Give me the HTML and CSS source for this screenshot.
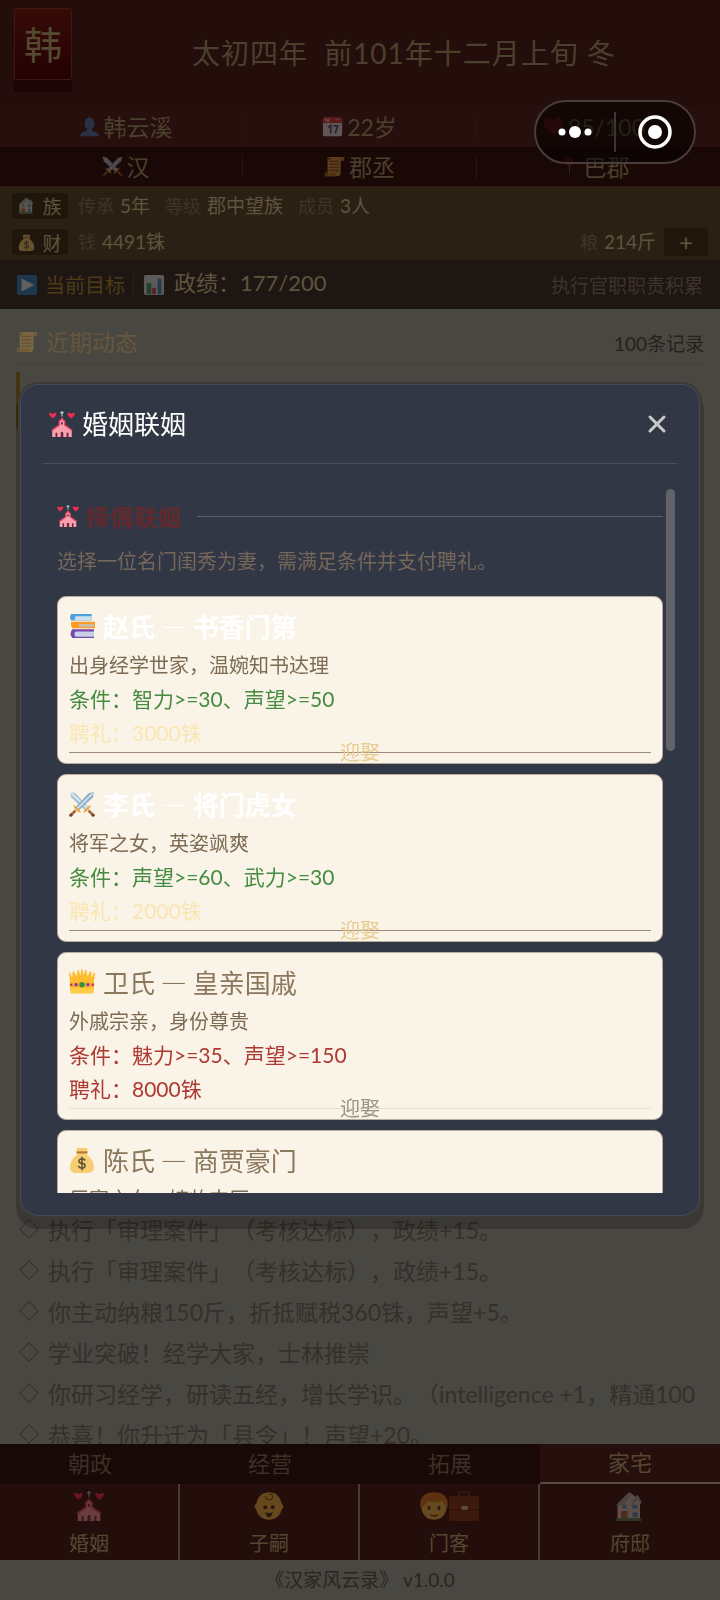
FILE: index.html
```html
<!DOCTYPE html>
<html lang="zh-CN">
<head>
<meta charset="utf-8">
<meta name="viewport" content="width=device-width, initial-scale=1">
<title>汉家风云录</title>
<link rel="stylesheet" href="styles.css">
</head>
<body>
<svg class="defs" aria-hidden="true">
  <symbol id="user" viewBox="0 0 24 24"><ellipse cx="12" cy="8.500" rx="5.500" ry="7" fill="#2a7dbd"/><path d="M9 14h6v3q7 1 8 6H1q1-5 8-6z" fill="#2a7dbd"/></symbol>
  <symbol id="calendar" viewBox="0 0 24 24"><rect x="1" y="2" width="22" height="21" rx="2" fill="#dfe9f0"/><path d="M1 8V3q0-2 2-2h18q2 0 2 2v5z" fill="#d32f3f"/><path d="M4 6V3M6 3v3h2V3M16 4h1M19 4h1" stroke="#fff" fill="none"/><path d="M7 13l3-2v9M13 11.500h5l-3 8.500" fill="none" stroke="#37668a" stroke-width="2.200"/></symbol>
  <symbol id="heart" viewBox="0 0 24 24"><path d="M12 22C3 15 1 11 1 7.500 1 1 9 0 12 6c3-6 11-5 11 1.500C23 11 21 15 12 22z" fill="#e8274b"/></symbol>
  <symbol id="swords" viewBox="0 0 24 24"><path d="M1 1l5 1 12 13-3 3L2 6z" fill="#a9c5d6"/><path d="M1 1l16 15" stroke="#e3f0f7" stroke-width="1.300"/><path d="M23 1l-5 1L6 15l3 3L22 6z" fill="#91afc2"/><path d="M22 2L8 16" stroke="#dcebf2" stroke-width="1.300"/><path d="M13 20l1-2 4-4 2-1-1 3-3 3zM11 20l-1-2-4-4-2-1 1 3 3 3z" fill="#f2a33c"/><path d="M18 18l4 4M6 18l-4 4" stroke="#a8663d" stroke-width="2.500"/><circle cx="22.300" cy="22.300" r="1.500" fill="#754335"/><circle cx="1.700" cy="22.300" r="1.500" fill="#754335"/></symbol>
  <symbol id="scroll" viewBox="0 0 24 24"><path d="M4 2q0-1 2-1h17v4h-4v14q0 4-4 4H1v-4h3z" fill="#e0ac4c"/><path d="M1 19h13v4H1zM19 1h4v4h-4z" fill="#c48a30"/><path d="M6 6h11M6 9.500h11M6 13h11M6 16.500h11" stroke="#9b6524" stroke-width="1.600"/><circle cx="3" cy="21" r="1.200" fill="#754919"/><circle cx="6" cy="3" r="1.200" fill="#754919"/></symbol>
  <symbol id="pin" viewBox="0 0 24 24"><path d="M11 9h2l-1 14z" fill="#9db4c0"/><circle cx="12" cy="6" r="5" fill="#e4334c"/></symbol>
  <symbol id="house" viewBox="0 0 24 24"><path d="M2 11L12 1l8 7v14H2z" fill="#d6d3ca"/><path d="M1 11L11 1l3 2-8 9zM14 7l4-4 3 5v3l-3-4-5 5z" fill="#a0b2b2"/><path d="M5 16h5v7H5z" fill="#a7653b"/><path d="M6 11h3v3H6zM14 11h4v3h-4zM14 17h4v4h-4z" fill="#389bd5"/><path d="M1 22h20v2H1z" fill="#438d5a"/></symbol>
  <symbol id="money" viewBox="0 0 24 24"><path d="M7 1h10v4l-1 2c5 3 7 8 7 12q0 5-5 5H6q-5 0-5-5C1 15 3 10 8 7L7 5z" fill="#f7ce72"/><path d="M7 4h10v2H7z" fill="#bb733e"/><path d="M15 12.500q-1-1.500-3-1.500c-4 0-3.500 4 0 4s4 4.500 0 4.500q-2.500 0-3.500-2M12 9v12.500" fill="none" stroke="#65563c" stroke-width="1.500"/></symbol>
  <symbol id="play" viewBox="0 0 24 24"><rect x="1" y="1" width="22" height="22" rx="2" fill="#1d80c7"/><path d="M6 5l14 7-14 7z" fill="#f3f8fa"/></symbol>
  <symbol id="chart" viewBox="0 0 24 24"><rect x="1" y="1" width="22" height="22" rx="2" fill="#dde8ef"/><path d="M4 10h5v12H4z" fill="#2f9c56"/><path d="M10 15h4v7h-4z" fill="#d23a49"/><path d="M16 5h4v17h-4z" fill="#3588c3"/></symbol>
  <symbol id="wedding" viewBox="0 0 24 24"><path d="M12 0v5M10.500 1.500h3" stroke="#c5d0d7" stroke-width="1"/><path d="M3.500 7C-.5 4-.5 1.500 1.300 1.500l2.200 1 2.200-1C7.500 1.500 7.500 4 3.500 7zM20.500 7c-4-3-4-5.500-2.200-5.500l2.200 1 2.200-1c1.800 0 1.800 2.500-2.200 5.500z" fill="#f02e50"/><path d="M10 13V9l2-2 2 2v4l7 5v6H3v-6z" fill="#fb9eaf"/><path d="M2.500 18L9.500 13V9.500L12 7l2.500 2.500V13l7 5" fill="none" stroke="#ef4664" stroke-width="1.300"/><path d="M11.200 12.500v-2q.8-1 1.600 0v2zM10.800 24v-4q1.200-1.500 2.400 0v4zM6 24v-4h1.700v4zM16.300 24v-4H18v4z" fill="#642c43"/></symbol>
  <symbol id="books" viewBox="0 0 24 24"><path d="M2 1h19v6H2q-2-3 0-6z" fill="#4da2dc"/><path d="M6 3h15v4H5z" fill="#cde0ed"/><path d="M2 8h22v6H3q-2-3-1-6z" fill="#ff9c20"/><path d="M9 10h14v3H9z" fill="#ccbca0"/><path d="M3 15h20v8H3q-3-4 0-8z" fill="#7447ac"/><path d="M6 17h17v5H6q-2-3 0-5z" fill="#c6cfe5"/></symbol>
  <symbol id="crown" viewBox="0 0 24 24"><path d="M1 12L0 4l1-1 2 5 .5-6h1L7 7l1-6h1l1.500 5L11.500 0h1l1 6L15 1h1l1 6 2.500-5h1l.5 6 2-5 1 1-1 8v8H1z" fill="#ffbc2e"/><path d="M1 12.500h22v4H1z" fill="#f0ae2c"/><path d="M1.500 18q10.500-1.500 21 0v4.500h-21z" fill="#ffcb43"/><circle cx="12" cy="14.500" r="2.500" fill="#38933b"/><circle cx="6.500" cy="14.500" r="1.500" fill="#9132b3"/><circle cx="17.500" cy="14.500" r="1.500" fill="#9132b3"/><circle cx="2" cy="14.500" r="1.200" fill="#dd3146"/><circle cx="22" cy="14.500" r="1.200" fill="#dd3146"/></symbol>
  <symbol id="baby" viewBox="0 0 24 24"><path d="M2 10C3 4 7 1 12 1s9 3 10 9q3 2 0 5c-1 5-5 8-10 8S3 20 2 15q-3-3 0-5z" fill="#edc342"/><path d="M9 4c0 4 7 4 6 0q-1-2-3-1" fill="none" stroke="#987124" stroke-width="1.200"/><circle cx="9" cy="13" r="1.600" fill="#3b2820"/><circle cx="15" cy="13" r="1.600" fill="#3b2820"/><path d="M9 17q3 1 6 0-1 4-3 4t-3-4z" fill="#3b2820"/></symbol>
  <symbol id="boy" viewBox="0 0 24 24"><path d="M2 8h20v6c-1 6-5 9-10 9S3 20 2 14z" fill="#efc64a"/><path d="M1 13Q0 1 12 1t11 12q-3-1-4-5-6 2-12 0-2 4-6 5z" fill="#d97b1c"/><path d="M8 12v3M16 12v3" stroke="#402b1c" stroke-width="2"/><path d="M9 19q3 2 6 0" fill="none" stroke="#8f442a" stroke-width="1.300"/></symbol>
  <symbol id="briefcase" viewBox="0 0 24 24"><path d="M8 5V1h8v4" fill="none" stroke="#633222" stroke-width="1.500"/><rect y="4" width="24" height="20" rx="1" fill="#74350f"/><path d="M0 15h24" stroke="#462010"/><path d="M10 12h5v3h-5z" fill="#d5d3cc"/></symbol>
</svg>

<div class="page">
  <header class="banner">
    <div class="seal">韩</div>
    <h1 class="date"><span class="era">太初四年</span><span>前101年十二月上旬</span><span class="season">冬</span></h1>
  </header>

  <div class="stats">
    <div class="stat"><svg class="icon dim"><use href="#user"/></svg>韩云溪</div>
    <div class="stat"><svg class="icon dim"><use href="#calendar"/></svg>22岁</div>
    <div class="stat"><svg class="icon faint"><use href="#heart"/></svg>85/100</div>
  </div>
  <div class="stats stats-dark">
    <div class="stat"><svg class="icon dim"><use href="#swords"/></svg>汉</div>
    <div class="stat"><svg class="icon dim"><use href="#scroll"/></svg>郡丞</div>
    <div class="stat"><svg class="icon faint"><use href="#pin"/></svg>巴郡</div>
  </div>

  <section class="clan">
    <div class="clan-row">
      <span class="chip"><svg class="icon-s dim"><use href="#house"/></svg>族</span>
      <span class="pair"><span class="key">传承</span>5年</span>
      <span class="pair"><span class="key">等级</span>郡中望族</span>
      <span class="pair"><span class="key">成员</span>3人</span>
    </div>
    <div class="clan-row">
      <span class="chip"><svg class="icon-s dim"><use href="#money"/></svg>财</span>
      <span class="pair"><span class="key">钱</span>4491铢</span>
      <span class="pair grain"><span class="key">粮</span>214斤</span>
      <button class="add" type="button" aria-label="购粮">+</button>
    </div>
  </section>

  <section class="goal">
    <svg class="icon-m dim"><use href="#play"/></svg><span class="goal-name">当前目标</span>
    <svg class="icon-m dim"><use href="#chart"/></svg><span class="goal-value">政绩：177/200</span>
    <span class="goal-tip">执行官职职责积累</span>
  </section>

  <main class="news">
    <div class="news-head"><svg class="icon-m dim"><use href="#scroll"/></svg><h2>近期动态</h2><span class="count">100条记录</span></div>
    <div class="latest"></div>
    <ul class="log">
      <li>执行「审理案件」（考核达标），政绩+15。</li>
      <li>执行「审理案件」（考核达标），政绩+15。</li>
      <li>你主动纳粮150斤，折抵赋税360铢，声望+5。</li>
      <li>学业突破！经学大家，士林推崇</li>
      <li>你研习经学，研读五经，增长学识。（intelligence +1，精通100</li>
      <li>恭喜！你升迁为「县令」！声望+20。</li>
    </ul>
  </main>

  <nav>
    <div class="tabs">
      <button type="button">朝政</button><button type="button">经营</button><button type="button">拓展</button><button class="active" type="button">家宅</button>
    </div>
    <div class="menu">
      <button type="button"><span class="pics"><svg class="icon-l dim"><use href="#wedding"/></svg></span>婚姻</button>
      <button type="button"><span class="pics"><svg class="icon-l dim"><use href="#baby"/></svg></span>子嗣</button>
      <button type="button"><span class="pics"><svg class="icon-l dim"><use href="#boy"/></svg><svg class="icon-l dim"><use href="#briefcase"/></svg></span>门客</button>
      <button type="button"><span class="pics"><svg class="icon-l dim"><use href="#house"/></svg></span>府邸</button>
    </div>
  </nav>
  <footer>《汉家风云录》 v1.0.0</footer>
</div>

<div class="capsule">
  <button type="button" aria-label="更多"><svg width="36" height="14" viewBox="0 0 36 14"><circle cx="5" cy="7" r="3.500"/><circle cx="18" cy="7" r="6"/><circle cx="31" cy="7" r="3.500"/></svg></button>
  <button type="button" aria-label="关闭小程序"><svg width="34" height="34" viewBox="0 0 34 34"><circle cx="17" cy="17" r="15" fill="none" stroke="#fff" stroke-width="3.500"/><circle cx="17" cy="17" r="7"/></svg></button>
</div>

<div class="overlay">
  <div class="modal" role="dialog" aria-labelledby="dialog-title">
    <div class="modal-head">
      <svg class="icon-t"><use href="#wedding"/></svg>
      <h2 id="dialog-title">婚姻联姻</h2>
      <button class="close" type="button" aria-label="关闭"><svg width="20" height="20" viewBox="0 0 20 20"><path d="M3 3l14 14M17 3L3 17" fill="none" stroke="#c9c9c9" stroke-width="3" stroke-linecap="round"/></svg></button>
    </div>
    <div class="modal-body">
      <div class="scroller">
        <h3 class="section"><svg class="icon-m"><use href="#wedding"/></svg>择偶联姻</h3>
        <p class="intro">选择一位名门闺秀为妻，需满足条件并支付聘礼。</p>
        <article class="card open">
          <h4><svg class="icon-t"><use href="#books"/></svg>赵氏 — 书香门第</h4>
          <p>出身经学世家，温婉知书达理</p>
          <p class="need">条件：智力&gt;=30、声望&gt;=50</p>
          <p class="cost">聘礼：3000铢</p>
          <button type="button">迎娶</button>
        </article>
        <article class="card open">
          <h4><svg class="icon-t"><use href="#swords"/></svg>李氏 — 将门虎女</h4>
          <p>将军之女，英姿飒爽</p>
          <p class="need">条件：声望&gt;=60、武力&gt;=30</p>
          <p class="cost">聘礼：2000铢</p>
          <button type="button">迎娶</button>
        </article>
        <article class="card">
          <h4><svg class="icon-t"><use href="#crown"/></svg>卫氏 — 皇亲国戚</h4>
          <p>外戚宗亲，身份尊贵</p>
          <p class="need">条件：魅力&gt;=35、声望&gt;=150</p>
          <p class="cost">聘礼：8000铢</p>
          <button type="button" disabled>迎娶</button>
        </article>
        <article class="card">
          <h4><svg class="icon-t"><use href="#money"/></svg>陈氏 — 商贾豪门</h4>
          <p>巨富之女，嫁妆丰厚</p>
        </article>
      </div>
      <div class="thumb"></div>
    </div>
  </div>
</div>
</body>
</html>
```
FILE: styles.css
```css
* { box-sizing: border-box; }
body { margin: 0; background: #494741; font-family: Lato, "Noto Sans CJK SC", sans-serif; text-spacing-trim: space-all; }
h1, h2, h3, h4, p, ul { margin: 0; padding: 0; font-weight: 400; }
button { font: inherit; color: inherit; background: none; border: 0; padding: 0; }
svg { display: block; flex: none; }
.defs { position: absolute; width: 0; height: 0; }
.dim { opacity: 0.32; }
.faint { opacity: 0.2; }
.icon { width: 21px; height: 21px; }
.icon-s { width: 17px; height: 17px; }
.icon-m { width: 22px; height: 22px; }
.icon-t { width: 26px; height: 26px; }
.icon-l { width: 30px; height: 30px; }

.page { display: flex; flex-direction: column; height: 100vh; overflow: hidden; }

.banner { display: flex; height: 106px; padding: 8px 14px; flex: none; background: #240e0b; color: #4b402e; }
.seal { width: 58px; height: 72px; line-height: 70px; font-size: 38px; text-align: center; color: #554a31; background: linear-gradient(#360b08, #230202); border: 1px solid #42180e; border-radius: 2px; box-shadow: 0 12px 0 #1c0605; }
.date { flex: 1; display: flex; justify-content: center; gap: 8px; padding-left: 30px; font-size: 28px; line-height: 90px; letter-spacing: 1px; white-space: nowrap; }
.era { margin-right: 8px; }

.stats { display: grid; grid-template-columns: repeat(3, 1fr); height: 41px; padding: 0 9px; flex: none; align-items: center; background: #270f0d; color: #4b402e; font-size: 23px; }
.stats-dark { height: 40px; background: #1a0806; border-bottom: 1px solid #2a1c10; }
.stat { display: flex; align-items: center; justify-content: center; gap: 4px; height: 24px; line-height: 22px; border-right: 1px solid #2e130f; }
.stat:last-child { border-right: 0; }

.clan { flex: none; background: #2a2114; color: #60543f; font-size: 19px; }
.clan-row { display: flex; align-items: center; height: 37px; padding: 0 12px; gap: 15px; }
.clan-row + .clan-row { height: 36px; }
.chip { display: flex; align-items: center; justify-content: center; gap: 7px; width: 56px; height: 26px; margin-right: -5px; border-radius: 4px; background: #20170c; }
.pair { display: flex; gap: 6px; white-space: nowrap; line-height: 26px; }
.key { font-size: 18px; color: #3f3427; }
.grain { margin-left: auto; margin-right: -7px; }
.add { width: 44px; height: 28px; border-radius: 4px; background: #20170c; font-size: 24px; line-height: 26px; }

.goal { display: flex; align-items: center; gap: 7px; height: 49px; padding: 0 17px 0 16px; flex: none; background: #1d1612; color: #60543f; font-size: 22px; }
.goal-value { line-height: 24px; padding: 0 0 3px 2px; }
.goal-name { font-size: 20px; color: #4f3b17; padding-right: 8px; margin-right: 2px; border-right: 1px solid #2a2019; line-height: 24px; }
.goal-tip { margin-left: auto; font-size: 19px; color: #3f342b; }

.news { flex: 1; min-height: 0; display: flex; flex-direction: column; overflow: hidden; padding: 13px 16px 0; }
.news-head { display: flex; align-items: center; gap: 8px; height: 43px; flex: none; padding-bottom: 2px; border-bottom: 1px solid #413f39; color: #67563e; }
.news-head h2 { font-size: 23px; line-height: 40px; }
.count { margin-left: auto; font-size: 19px; color: #2a201b; }
.latest { height: 57px; margin-top: 7px; flex: none; border-left: 4px solid #443512; }
.log { flex: 1; min-height: 0; display: flex; flex-direction: column; justify-content: flex-end; margin-bottom: -10px; list-style: none; color: #35302b; font-size: 23px; }
.log li { display: flex; align-items: center; gap: 8px; height: 41px; flex: none; padding-left: 6px; white-space: nowrap; }
.log li::before { content: ""; width: 12px; height: 12px; flex: none; margin-right: 4px; border: 1px solid #38322d; rotate: 45deg; }

nav { flex: none; color: #554731; }
.tabs, .menu { display: grid; grid-template-columns: repeat(4, 1fr); }
.tabs { background: #180806; color: #3d3027; font-size: 22px; }
.tabs button { height: 40px; line-height: 36px; }
.tabs .active { color: #554731; background: #270f0d; border-bottom: 2px solid #5a4a40; }
.menu { background: #240e0b; font-size: 20px; }
.menu button { display: flex; flex-direction: column; align-items: center; gap: 7px; height: 76px; padding-top: 7px; line-height: 30px; border-right: 2px solid #4b3b32; }
.menu button:last-child { border-right: 0; }
.pics { display: flex; }
footer { flex: none; height: 40px; line-height: 40px; text-align: center; font-size: 19px; color: #2a2520; }

.capsule { position: fixed; top: 100px; right: 24px; display: flex; align-items: center; width: 162px; height: 64px; border: 2px solid #4a3c3a; border-radius: 32px; background: rgba(0, 0, 0, 0.5); }
.capsule button { flex: 1; display: flex; align-items: center; justify-content: center; height: 40px; fill: #fff; }
.capsule button + button { border-left: 2px solid #3f3434; }

.overlay { position: fixed; inset: 0; display: flex; align-items: center; padding: 0 20px; pointer-events: none; }
.modal { flex: 1; display: flex; flex-direction: column; height: 52vh; padding: 0 22px 22px; border: 1px solid #474b57; border-radius: 18px; background: #323746; box-shadow: 0 0 0 2px #3c3a36, 0 9px 0 4px rgba(0, 0, 0, 0.2); pointer-events: auto; }
.modal-head { display: flex; align-items: center; gap: 7px; height: 79px; flex: none; padding: 0 8px 0 6px; border-bottom: 1px solid #4c4e5a; }
.modal-head h2 { font-size: 26px; line-height: 40px; color: #fff; }
.close { margin-left: auto; padding: 2px; }
.modal-body { position: relative; flex: 1; min-height: 0; margin-top: 24px; padding: 0 14px; }
.scroller { height: 100%; overflow: hidden; }
.thumb { position: absolute; top: 1px; right: 2px; width: 9px; height: 262px; border-radius: 5px; background: #62636a; }
.section { display: flex; align-items: center; gap: 7px; height: 56px; font-size: 23px; letter-spacing: 1px; font-weight: 700; color: #632a2d; }
.section::after { content: ""; flex: 1; height: 1px; margin-left: 8px; background: #5c5e68; }
.intro { font-size: 20px; line-height: 34px; margin-bottom: 18px; color: #75675a; }

.card { height: 168px; margin-bottom: 10px; padding: 11px 11px 0; border: 1px solid #b9aa99; border-radius: 9px; background: #faf3e7; color: #7d6b54; }
.card h4 { display: flex; align-items: center; gap: 8px; height: 40px; padding-bottom: 4px; font-family: "Noto Sans CJK SC", sans-serif; font-size: 26px; line-height: 36px; color: #8a775c; }
.card p { font-size: 20px; line-height: 34px; }
.card .need, .card .cost { font-size: 21px; color: #ad3932; }
.card button { display: block; width: 100%; height: 1px; margin-top: 2px; font-size: 20px; line-height: 1px; background: #e6ded2; color: #9d958a; }
.card.open h4 { color: #fff; font-weight: 700; }
.card.open .need { color: #458c42; }
.card.open .cost { color: #fae6b3; }
.card.open button { background: #9f8a7c; color: #e8cd91; }
```
